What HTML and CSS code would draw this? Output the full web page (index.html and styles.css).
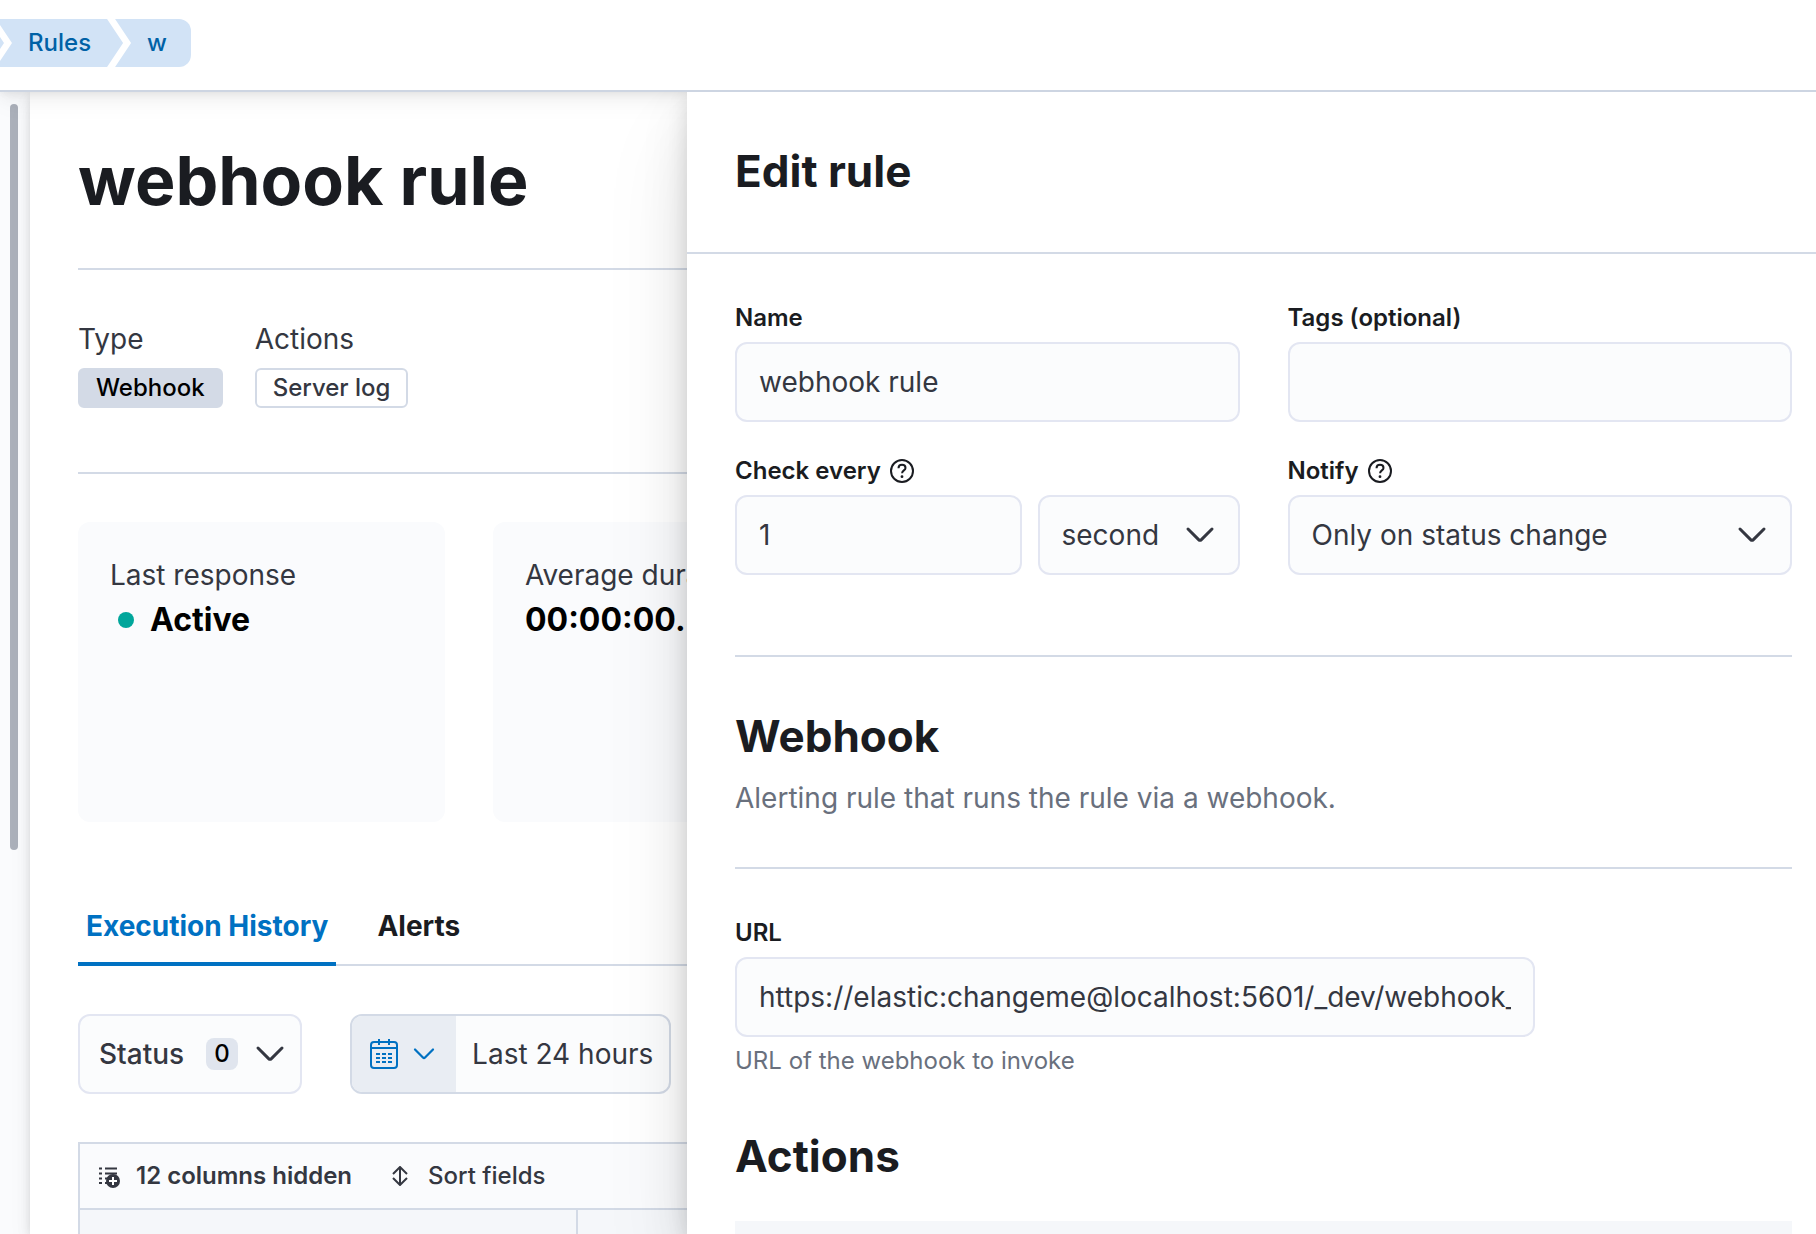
FILE: index.html
```html
<!DOCTYPE html>
<html lang="en">
<head>
<meta charset="utf-8">
<title>webhook rule</title>
<link rel="stylesheet" href="styles.css">
</head>
<body>
<header class="header">
  <nav class="crumbs" aria-label="Breadcrumbs">
    <span class="crumb crumb-cut"></span>
    <a class="crumb crumb-link" href="#rules">Rules</a>
    <a class="crumb crumb-last" href="#rule">w</a>
  </nav>
</header>
<div class="workspace">
  <div class="rail"><div class="thumb"></div></div>
  <main class="page">
    <h1 class="page-title">webhook rule</h1>
    <hr class="rule">
    <section class="summary">
      <div>
        <div class="text">Type</div>
        <span class="badge badge-fill">Webhook</span>
      </div>
      <div>
        <div class="text">Actions</div>
        <span class="badge badge-line">Server log</span>
      </div>
    </section>
    <hr class="rule">
    <section class="cards">
      <div class="card">
        <div class="text">Last response</div>
        <div class="stat"><span class="dot"></span>Active</div>
      </div>
      <div class="card">
        <div class="text">Average duration</div>
        <div class="stat">00:00:00.583</div>
      </div>
    </section>
    <div class="tabs" role="tablist">
      <button class="tab tab-on" role="tab" aria-selected="true">Execution History</button>
      <button class="tab" role="tab" aria-selected="false">Alerts</button>
    </div>
    <div class="filters">
      <button class="status">
        Status <span class="count">0</span>
        <svg class="chevron" viewBox="0 0 32 32"><path d="M4 10l10.600 10.600a2 2 0 0 0 2.800 0L28 10"/></svg>
      </button>
      <div class="dates">
        <button class="dates-quick" aria-label="Date quick select">
          <svg class="calendar" viewBox="0 0 28 32"><rect x="1" y="4" width="26" height="26" rx="3"/><path d="M1 10h26M9 1v6M19 1v6M6 16h4M12 16h4M18 16h4M6 20h4M12 20h4M18 20h4M6 24h4M12 24h4M18 24h4"/></svg>
          <svg class="chevron chevron-small" viewBox="0 0 32 32"><path d="M4 10l10.600 10.600a2 2 0 0 0 2.800 0L28 10"/></svg>
        </button>
        <button class="dates-value">Last 24 hours</button>
      </div>
    </div>
    <div class="grid">
      <div class="toolbar">
        <button class="tool tool-on">
          <svg class="tool-icon" viewBox="0 0 22 24"><path class="stroke" d="M1 4.500h3M7 4.500h12M1 9.500h3M7 9.500h12M1 14.500h3M7 14.500h4M1 19h3M7 19h3"/><circle cx="15" cy="17" r="7"/><path class="plus" d="M15 13v8M11 17h8"/></svg>
          12 columns hidden
        </button>
        <button class="tool">
          <svg class="sort-icon" viewBox="0 0 16 20"><path class="stroke" d="M8 2v16M1 8l7-7 7 7M1 12l7 7 7-7"/></svg>
          Sort fields
        </button>
      </div>
      <table class="table"><thead><tr><th></th><th></th></tr></thead></table>
    </div>
  </main>
  <aside class="flyout">
    <header class="flyout-head"><h2 class="heading">Edit rule</h2></header>
    <form class="flyout-body">
      <div class="fields">
        <div>
          <label class="label" for="name">Name</label>
          <input class="control" id="name" type="text" value="webhook rule">
        </div>
        <div>
          <label class="label" for="tags">Tags (optional)</label>
          <input class="control" id="tags" type="text">
        </div>
        <div>
          <label class="label" for="every">Check every
            <svg class="help" viewBox="0 0 24 24"><circle cx="12" cy="12" r="11"/><path d="M8.500 9.200c0-2.200 1.500-3.400 3.500-3.400s3.500 1.200 3.500 3.100c0 2.400-3.400 2.600-3.400 5.300"/><circle class="help-dot" cx="12" cy="17.700" r="1.400"/></svg>
          </label>
          <div class="interval">
            <input class="control" id="every" type="text" value="1">
            <div class="select">
              <select class="control" aria-label="Unit"><option>second</option></select>
              <svg class="chevron select-arrow" viewBox="0 0 32 32"><path d="M4 10l10.600 10.600a2 2 0 0 0 2.800 0L28 10"/></svg>
            </div>
          </div>
        </div>
        <div>
          <label class="label" for="notify">Notify
            <svg class="help" viewBox="0 0 24 24"><circle cx="12" cy="12" r="11"/><path d="M8.500 9.200c0-2.200 1.500-3.400 3.500-3.400s3.500 1.200 3.500 3.100c0 2.400-3.400 2.600-3.400 5.300"/><circle class="help-dot" cx="12" cy="17.700" r="1.400"/></svg>
          </label>
          <div class="select">
            <select class="control" id="notify"><option>Only on status change</option></select>
            <svg class="chevron select-arrow" viewBox="0 0 32 32"><path d="M4 10l10.600 10.600a2 2 0 0 0 2.800 0L28 10"/></svg>
          </div>
        </div>
      </div>
      <hr class="rule rule-far">
      <h2 class="heading">Webhook</h2>
      <p class="text about">Alerting rule that runs the rule via a webhook.</p>
      <hr class="rule">
      <div class="url">
        <label class="label" for="url">URL</label>
        <input class="control" id="url" type="text" value="https://elastic:changeme@localhost:5601/_dev/webhook_rule">
        <p class="hint">URL of the webhook to invoke</p>
      </div>
      <h2 class="heading">Actions</h2>
      <div class="action"></div>
    </form>
  </aside>
</div>
</body>
</html>
```
FILE: styles.css
```css
* { box-sizing: border-box; }

body {
  margin: 0;
  height: 100vh;
  display: flex;
  flex-direction: column;
  overflow: hidden;
  background: #fff;
  color: #343741;
  font-family: Inter, "Liberation Sans", sans-serif;
  font-size: 28px;
  line-height: 42px;
}

h1, h2, p, hr { margin: 0; }
button, input, select { font: inherit; color: inherit; }
button { border: 0; background: none; padding: 0; }
svg { flex: none; fill: none; stroke: currentColor; stroke-width: 2; }

.header {
  position: relative;
  z-index: 1;
  flex: none;
  padding: 19px 0 23px;
  border-bottom: 2px solid #cdd5e2;
  background: #fff;
  box-shadow: 0 2px 8px rgba(0, 0, 0, .06), 0 5px 16px rgba(0, 0, 0, .04), 0 11px 24px rgba(0, 0, 0, .04);
}

.crumbs { display: flex; margin-left: -16px; }
.crumb {
  height: 48px;
  background: #d2e3f6;
  color: #0061a6;
  font-size: 24px;
  font-weight: 500;
  line-height: 48px;
  text-decoration: none;
}
.crumb + .crumb { margin-left: -8px; }
.crumb-cut { width: 20px; clip-path: polygon(0 0, 4px 0, 100% 50%, 4px 100%, 0 100%); }
.crumb-link {
  padding: 0 32px;
  clip-path: polygon(0 0, calc(100% - 16px) 0, 100% 50%, calc(100% - 16px) 100%, 0 100%, 16px 50%);
}
.crumb-last {
  padding: 0 24px 0 32px;
  border-radius: 0 12px 12px 0;
  clip-path: polygon(0 0, 100% 0, 100% 100%, 0 100%, 16px 50%);
}

.workspace { flex: 1; min-height: 0; display: flex; overflow: hidden; }

.rail { flex: 0 0 30px; padding: 12px 12px 0 10px; background: #fafbfd; }
.thumb { height: 66%; border-radius: 4px; background: #abb0ba; }

.page {
  flex: 0 0 657px;
  padding: 48px 0 0 48px;
  background: #fff;
  box-shadow: 0 2px 8px rgba(0, 0, 0, .08), 0 5px 16px rgba(0, 0, 0, .06), 0 11px 24px rgba(0, 0, 0, .05);
  overflow: hidden;
  white-space: nowrap;
}
.page-title {
  margin-bottom: 48px;
  color: #1a1c21;
  font-size: 68px;
  font-weight: 700;
  line-height: 80px;
}
.rule { border: 0; height: 2px; margin-bottom: 48px; background: #d3dae6; }

.summary { display: flex; gap: 32px; margin-bottom: 64px; }
.badge {
  display: block;
  margin-top: 8px;
  padding: 0 16px;
  border: 2px solid #d3dae6;
  border-radius: 6px;
  font-size: 24px;
  font-weight: 500;
  line-height: 36px;
}
.badge-fill { background: #d3dae6; color: #000; }

.cards { display: flex; gap: 48px; margin-bottom: 64px; }
.card {
  flex: 0 0 367px;
  height: 300px;
  padding: 32px;
  border-radius: 12px;
  background: #fafbfd;
}
.stat {
  display: flex;
  align-items: center;
  color: #000;
  font-size: 32px;
  font-weight: 700;
  line-height: 48px;
}
.dot { width: 16px; height: 16px; margin: 0 16px 0 8px; border-radius: 50%; background: #00a69b; }

.tabs {
  display: flex;
  gap: 33px;
  margin-bottom: 48px;
  box-shadow: inset 0 -2px #d3dae6;
}
.tab { height: 80px; padding: 0 8px; color: #1a1c21; font-weight: 700; }
.tab-on { color: #0071c2; box-shadow: inset 0 -4px #0071c2; }

.filters { display: flex; gap: 48px; margin-bottom: 48px; }
.status {
  display: flex;
  align-items: center;
  height: 80px;
  padding: 0 14px 0 19px;
  border: 2px solid #e3e6f2;
  border-radius: 12px;
  background: #fbfcfd;
  font-weight: 500;
}
.count {
  width: 32px;
  margin: 0 16px 0 22px;
  border-radius: 8px;
  background: #e0e5ee;
  color: #000;
  font-size: 24px;
  font-weight: 500;
  line-height: 32px;
}
.chevron { width: 32px; height: 32px; stroke-width: 3; stroke-linecap: round; }
.chevron-small { width: 24px; height: 24px; }
.dates {
  display: flex;
  height: 80px;
  border: 2px solid #d3dae6;
  border-radius: 12px;
  background: #fbfcfd;
  overflow: hidden;
}
.dates-quick {
  display: flex;
  align-items: center;
  gap: 14px;
  padding: 0 20px 0 18px;
  background: #e9edf3;
  color: #0071c2;
}
.calendar { width: 28px; height: 32px; }
.dates-value { padding: 0 16px; }

.grid { margin-right: -48px; border: 2px solid #d3dae6; }
.toolbar {
  display: flex;
  gap: 40px;
  height: 64px;
  padding: 0 18px;
  background: #fafbfd;
}
.tool { display: flex; align-items: center; gap: 16px; font-size: 24px; font-weight: 500; }
.tool-on { font-weight: 600; }
.tool-icon { width: 22px; height: 24px; fill: currentColor; stroke: none; }
.tool-icon .stroke { stroke: currentColor; }
.tool-icon .plus { stroke: #fff; }
.sort-icon { width: 16px; height: 20px; margin-right: 4px; }
.table { width: 100%; border-collapse: collapse; table-layout: fixed; }
.table th { height: 64px; border-top: 2px solid #d3dae6; background: #f5f7fa; }
.table th:first-child { width: 497px; border-right: 2px solid #d3dae6; }

.flyout {
  position: relative;
  z-index: 2;
  flex: 1;
  min-width: 0;
  background: #fff;
  box-shadow: 0 5px 18px rgba(0, 0, 0, .13), 0 19px 48px rgba(0, 0, 0, .09), 0 44px 86px rgba(0, 0, 0, .08);
}
.flyout-head { padding: 48px 48px 50px; border-bottom: 2px solid #d3dae6; }
.heading { color: #1a1c21; font-size: 44px; font-weight: 700; line-height: 62px; }
.flyout-body { padding: 48px 24px 0 48px; }
.fields { display: grid; grid-template-columns: 1fr 1fr; gap: 33px 48px; }
.label {
  display: flex;
  align-items: center;
  gap: 9px;
  margin-bottom: 8px;
  color: #1a1c21;
  font-size: 24px;
  font-weight: 600;
  line-height: 32px;
}
.help { width: 24px; height: 24px; }
.help .help-dot { fill: currentColor; stroke: none; }
.control {
  display: block;
  width: 100%;
  height: 80px;
  padding: 0 22px;
  border: 2px solid #e3e6f2;
  border-radius: 12px;
  background: #fbfcfd;
  outline: 0;
  appearance: none;
}
.interval { display: grid; grid-template-columns: 1fr 202px; gap: 16px; }
.select { position: relative; }
.select-arrow { position: absolute; right: 24px; top: 24px; pointer-events: none; }
.rule-far { margin-top: 80px; }
.about { margin: 10px 0 48px; color: #69707d; }
.url { max-width: 800px; margin-bottom: 48px; }
.hint { margin-top: 8px; color: #69707d; font-size: 24px; line-height: 32px; }
.action { height: 80px; margin-top: 34px; background: #f5f7fa; }
```
